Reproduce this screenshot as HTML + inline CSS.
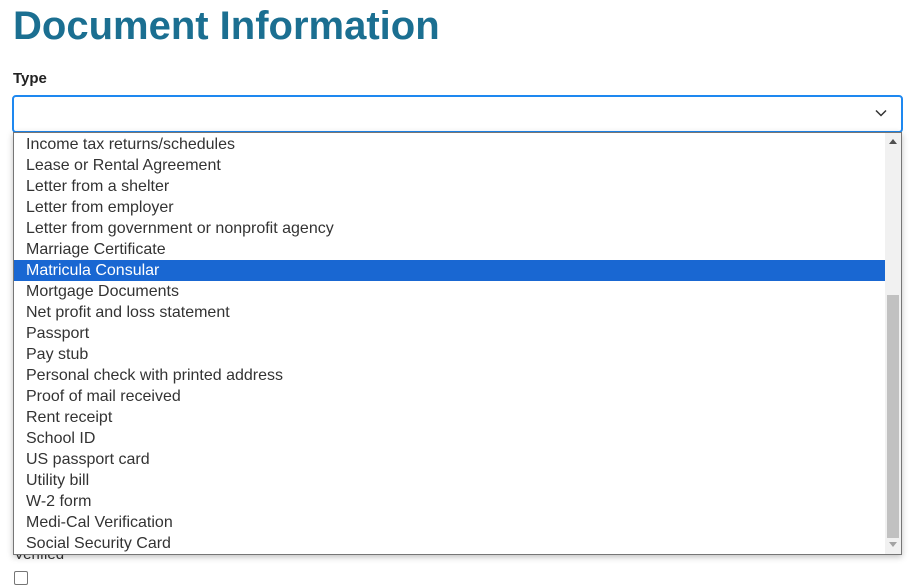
<!DOCTYPE html>
<html><head><meta charset="utf-8"><style>
body{margin:0;width:924px;height:574px;overflow:hidden;background:#fff;font-family:"Liberation Sans",sans-serif;position:relative}
h1{position:absolute;left:13px;top:2px;margin:0;font-size:40px;font-weight:bold;color:#1b6f91;line-height:48px}
.lbl{position:absolute;left:13px;top:70px;font-size:15px;font-weight:bold;color:#222}
.sel{position:absolute;left:12px;top:95px;width:887px;height:34px;border:2px solid #1e88f0;border-radius:4px;background:#fff}
.chev{position:absolute;right:14px;top:12px}
.dd{position:absolute;left:13px;top:132px;width:887px;height:421px;border:1px solid #767676;background:#fff;box-shadow:0 2px 6px rgba(0,0,0,.25)}
.in{padding-top:1px}
.it{height:21px;line-height:21px;padding-left:12px;font-size:16px;color:#333;white-space:nowrap}
.hi{background:#1967d2;color:#fff}
.sb{position:absolute;right:0;top:0;width:16px;height:421px;background:#f1f1f1}
.th{position:absolute;left:2px;right:2px;top:162px;height:243px;background:#c1c1c1}
.ver{position:absolute;left:14px;top:546px;font-size:15px;color:#333}
.cb{position:absolute;left:14px;top:571px;width:12px;height:12px;border:1px solid #767676;border-radius:2px}
</style></head><body>
<h1>Document Information</h1>
<div class="lbl">Type</div>
<div class="sel"><svg class="chev" width="12" height="8" viewBox="0 0 12 8"><path d="M1 1.5L6 6.5L11 1.5" fill="none" stroke="#333" stroke-width="1.5"/></svg></div>
<div class="ver">Verified</div>
<div class="cb"></div>
<div class="dd"><div class="in">
<div class="it">Income tax returns/schedules</div>
<div class="it">Lease or Rental Agreement</div>
<div class="it">Letter from a shelter</div>
<div class="it">Letter from employer</div>
<div class="it">Letter from government or nonprofit agency</div>
<div class="it">Marriage Certificate</div>
<div class="it hi">Matricula Consular</div>
<div class="it">Mortgage Documents</div>
<div class="it">Net profit and loss statement</div>
<div class="it">Passport</div>
<div class="it">Pay stub</div>
<div class="it">Personal check with printed address</div>
<div class="it">Proof of mail received</div>
<div class="it">Rent receipt</div>
<div class="it">School ID</div>
<div class="it">US passport card</div>
<div class="it">Utility bill</div>
<div class="it">W-2 form</div>
<div class="it">Medi-Cal Verification</div>
<div class="it">Social Security Card</div>
</div>
<div class="sb"><div class="th"></div>
<svg style="position:absolute;left:4px;top:6px" width="8" height="5"><path d="M0 5L4 0L8 5Z" fill="#505050"/></svg>
<svg style="position:absolute;left:4px;top:409px" width="8" height="5"><path d="M0 0L4 5L8 0Z" fill="#a3a3a3"/></svg>
</div>
</div>
</body></html>
